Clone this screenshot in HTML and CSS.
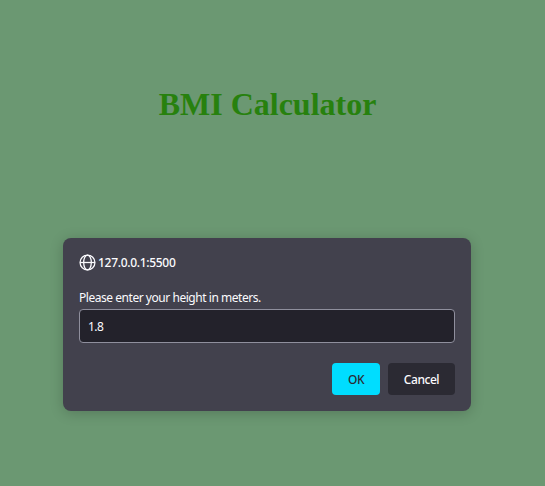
FILE: index.html
```html
<!DOCTYPE html>
<html lang="en">
<head>
<meta charset="utf-8">
<title>BMI Calculator</title>
<link rel="stylesheet" href="styles.css">
</head>
<body>
<h1 class="title">BMI Calculator</h1>
<form class="dialog">
  <div class="origin">
    <svg class="globe" viewBox="0 0 16 16" aria-hidden="true">
      <circle cx="8" cy="8" r="7"/>
      <ellipse cx="8" cy="8" rx="3.6" ry="7"/>
      <path d="M1 8h14"/>
    </svg>
    <span class="host">127.0.0.1:5500</span>
  </div>
  <label class="message" for="height">Please enter your height in meters.</label>
  <input class="field" id="height" type="text" value="1.8">
  <div class="actions">
    <button class="button primary" type="button">OK</button>
    <button class="button" type="button">Cancel</button>
  </div>
</form>
</body>
</html>
```
FILE: styles.css
```css
* {
  box-sizing: border-box;
}

body {
  margin: 0;
  height: 486px;
  overflow: hidden;
  background: #6b9872;
  color: #fbfbfe;
  font: 12px/16px "Noto Sans", sans-serif;
}

.title {
  margin: 0;
  padding: 86px 10px 0 0;
  height: 238px;
  color: #27810e;
  font: bold 32px/37px "Liberation Serif", serif;
  text-align: center;
}

.dialog {
  display: flex;
  flex-direction: column;
  width: 408px;
  height: 173px;
  margin-left: 63px;
  padding: 16px;
  border-radius: 8px;
  background: #42414d;
  box-shadow: 0 2px 14px rgba(0, 0, 0, 0.2);
}

.origin {
  display: flex;
  align-items: center;
  gap: 3px;
  height: 17px;
}

.globe {
  width: 17px;
  height: 17px;
  fill: none;
  stroke: #fbfbfe;
  stroke-width: 1.2;
}

.host {
  margin-left: -1px;
  font-weight: 500;
  letter-spacing: -0.3px;
}

.message {
  margin-top: 19px;
  height: 19px;
  letter-spacing: -0.46px;
}

.field {
  height: 34px;
  padding: 0 8px;
  border: 1px solid #8f8f9d;
  border-radius: 4px;
  background: #23222b;
  color: #fbfbfe;
  font: inherit;
  letter-spacing: -0.5px;
}

.actions {
  display: flex;
  justify-content: flex-end;
  gap: 8px;
  margin-top: 20px;
}

.button {
  width: 67px;
  height: 32px;
  padding: 2px 0 0;
  border: 0;
  border-radius: 4px;
  background: #2b2a33;
  color: #fbfbfe;
  font: 500 12px/16px "Noto Sans", sans-serif;
  letter-spacing: -0.45px;
}

.primary {
  width: 48px;
  background: #00ddff;
  color: #2b2a33;
}
```
